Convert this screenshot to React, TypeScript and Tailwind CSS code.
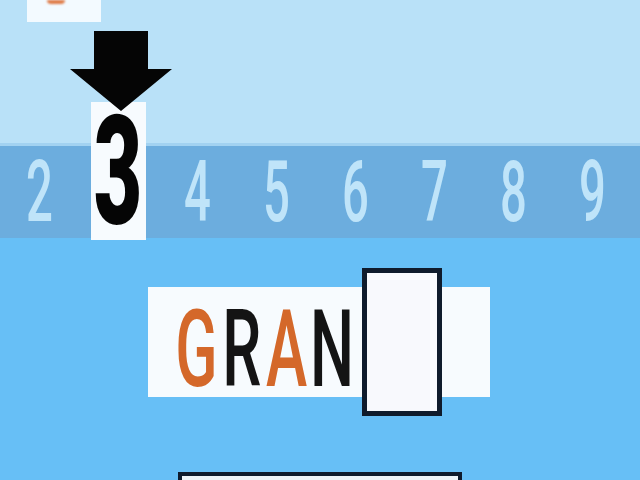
import { FC } from 'react';

const DIGITS = ['2', '3', '4', '5', '6', '7', '8', '9'];
const SELECTED = '3';

const LETTERS = [
  { ch: 'G', color: 'text-[#d4682a]' },
  { ch: 'R', color: 'text-[#141414]' },
  { ch: 'A', color: 'text-[#d4682a]' },
  { ch: 'N', color: 'text-[#141414]' },
];

const Arrow: FC = () => (
  <svg width="102" height="80" viewBox="0 0 102 80" className="block">
    <path d="M24 0 H78 V38 H102 L51 80 L0 38 H24 Z" fill="#050505" />
  </svg>
);

const DigitCell: FC<{ digit: string }> = ({ digit }) => {
  if (digit === SELECTED) {
    return (
      <div className="relative w-[79px] h-full flex justify-center">
        <div className="absolute top-[-44px] bottom-[-2px] w-[55px] bg-[#f7fbfe] flex items-center justify-center">
          <span className="block text-[152px] leading-none font-black text-[#050505] scale-x-[0.55] translate-y-[1px]">
            {digit}
          </span>
        </div>
        <div className="absolute top-[-115px] translate-x-[2px]">
          <Arrow />
        </div>
      </div>
    );
  }
  return (
    <div className="w-[79px] h-full flex items-center justify-center">
      <span className="block text-[86px] leading-none font-medium text-[#bfe4f9] scale-x-[0.55]">
        {digit}
      </span>
    </div>
  );
};

const App: FC = () => {
  return (
    <div className="w-[640px] h-[480px] overflow-hidden flex flex-col bg-[#67bff6] font-['Roboto','Liberation_Sans',sans-serif]">
      {/* top strip */}
      <div className="h-[143px] shrink-0 bg-[#b9e1f8]">
        <div className="relative ml-[27px] w-[74px] h-[22px] bg-[#f3faff]">
          <div className="absolute left-[20px] top-0 w-[18px] h-[4px] rounded-b-full bg-[#df7a46] blur-[1px]" />
        </div>
      </div>

      {/* number band */}
      <div className="h-[95px] shrink-0 flex bg-[#6cadde] border-t-[3px] border-[#a2d2f1]">
        {DIGITS.map((d) => (
          <DigitCell key={d} digit={d} />
        ))}
      </div>

      {/* word */}
      <div className="flex-1 flex flex-col items-start">
        <div className="mt-[49px] ml-[148px] w-[342px] h-[110px] bg-[#f7fbfe] flex items-center pl-[26px]">
          <div className="flex pt-[15px]">
            {LETTERS.map((l, i) => (
              <div key={i} className="w-[45px] flex justify-center">
                <span className={`block text-[107px] leading-none font-medium scale-x-[0.58] ${l.color}`}>
                  {l.ch}
                </span>
              </div>
            ))}
          </div>
          <div className="ml-[8px] w-[80px] h-[148px] shrink-0 bg-[#f8f9fd] border-[5px] border-[#0f1b2c]" />
        </div>

        <div className="mt-[75px] ml-[178px] w-[284px] h-[40px] shrink-0 bg-[#eef4f8] border-[4px] border-[#0f1b2c]" />
      </div>
    </div>
  );
};

export default App;
